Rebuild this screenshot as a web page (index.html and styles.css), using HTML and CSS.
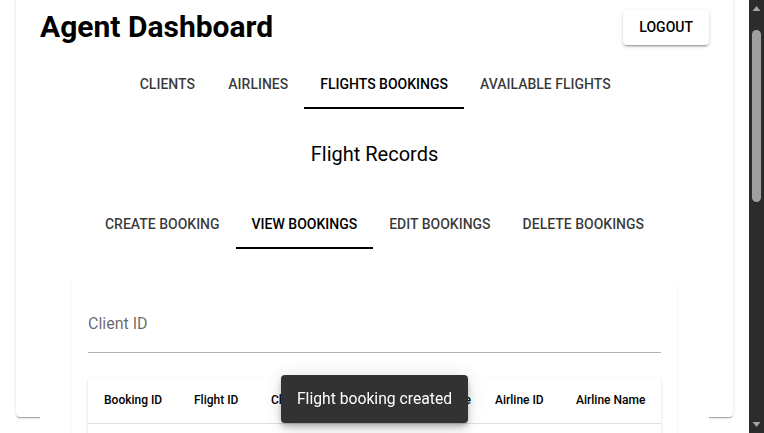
FILE: index.html
```html
<!DOCTYPE html>
<html lang="en">
<head>
<meta charset="utf-8">
<title>Agent Dashboard</title>
<link rel="stylesheet" href="styles.css">
</head>
<body>
<div class="page">
  <div class="card">
    <div class="content">
      <header class="topbar">
        <h1 class="title">Agent Dashboard</h1>
        <button class="btn-logout" type="button">LOGOUT</button>
      </header>
      <nav class="tabs">
        <button class="tab" type="button">CLIENTS</button>
        <button class="tab" type="button">AIRLINES</button>
        <button class="tab active" type="button">FLIGHTS BOOKINGS</button>
        <button class="tab" type="button">AVAILABLE FLIGHTS</button>
      </nav>
      <h2 class="section-title">Flight Records</h2>
      <nav class="tabs sub-tabs">
        <button class="tab" type="button">CREATE BOOKING</button>
        <button class="tab active" type="button">VIEW BOOKINGS</button>
        <button class="tab" type="button">EDIT BOOKINGS</button>
        <button class="tab" type="button">DELETE BOOKINGS</button>
      </nav>
      <section class="panel">
        <div class="field">
          <label class="field-label" for="client-id">Client ID</label>
          <input class="field-input" id="client-id" type="text">
        </div>
        <div class="table-wrap">
          <table class="table">
            <colgroup>
              <col class="c-booking">
              <col class="c-flight">
              <col class="c-client">
              <col class="c-date">
              <col class="c-airline">
              <col class="c-airline-name">
            </colgroup>
            <thead>
              <tr>
                <th>Booking ID</th>
                <th>Flight ID</th>
                <th>Client ID</th>
                <th>Departure Date</th>
                <th>Airline ID</th>
                <th>Airline Name</th>
              </tr>
            </thead>
            <tbody>
              <tr class="empty-row"><td colspan="6"></td></tr>
              <tr class="empty-row"><td colspan="6"></td></tr>
              <tr class="empty-row"><td colspan="6"></td></tr>
              <tr class="empty-row"><td colspan="6"></td></tr>
              <tr class="empty-row"><td colspan="6"></td></tr>
              <tr class="empty-row"><td colspan="6"></td></tr>
              <tr class="empty-row"><td colspan="6"></td></tr>
              <tr class="empty-row"><td colspan="6"></td></tr>
            </tbody>
          </table>
        </div>
      </section>
    </div>
  </div>
</div>
<div class="toast-layer">
  <div class="toast" role="status">Flight booking created</div>
</div>
<div class="scrollbar" aria-hidden="true">
  <svg class="sb-arrow" width="15" height="17" viewBox="0 0 15 17"><path d="M3.5 11 L7.5 6 L11.5 11 Z" fill="#a3a3a3"/></svg>
  <div class="sb-track">
    <div class="sb-thumb"></div>
  </div>
  <svg class="sb-arrow" width="15" height="17" viewBox="0 0 15 17"><path d="M3.5 6 L7.5 11 L11.5 6 Z" fill="#a3a3a3"/></svg>
</div>
<script src="script.js"></script>
</body>
</html>
```

FILE: styles.css
```css
* {
  box-sizing: border-box;
}

html {
  background: #fff;
}

body {
  margin: 0;
  color: #000;
  background: #fff;
  font-family: Roboto, "Liberation Sans", Arial, sans-serif;
}

.page {
  padding: 16px 31px 16px 16px;
}

.card {
  height: 100vh;
  background: #fff;
  border-radius: 4px;
  box-shadow: 0 2px 1px -1px rgba(0, 0, 0, 0.2), 0 1px 1px 0 rgba(0, 0, 0, 0.14), 0 1px 3px 0 rgba(0, 0, 0, 0.12);
  padding: 24px;
}

.content {
  background: #fff;
}

.topbar {
  display: flex;
  align-items: center;
  justify-content: space-between;
  height: 38px;
}

.title {
  margin: 0;
  font-size: 30px;
  line-height: 36px;
  font-weight: 700;
  color: #000;
}

.btn-logout {
  font-family: inherit;
  font-size: 14px;
  font-weight: 500;
  line-height: 23px;
  color: #000;
  background: #fff;
  border: 0;
  border-radius: 4px;
  padding: 6px 16px;
  margin-top: 0;
  box-shadow: 0 3px 1px -2px rgba(0, 0, 0, 0.2), 0 2px 2px 0 rgba(0, 0, 0, 0.14), 0 1px 5px 0 rgba(0, 0, 0, 0.12);
}

.tabs {
  display: flex;
  justify-content: center;
  margin-top: 15px;
}

.tab {
  font-family: inherit;
  font-size: 14px;
  font-weight: 500;
  line-height: 18px;
  color: rgba(0, 0, 0, 0.78);
  background: none;
  border: 0;
  min-width: 90px;
  height: 48px;
  padding: 14px 16px;
  border-bottom: 2px solid transparent;
}

.tab.active {
  color: #000;
  border-bottom-color: #000;
}

.section-title {
  margin: 29px 0 0;
  text-align: center;
  font-size: 20px;
  line-height: 32px;
  font-weight: 400;
  color: #000;
}

.sub-tabs {
  margin-top: 31px;
}

.panel {
  margin: 32px 32px 0;
  padding: 16px;
  background: #fff;
  border-radius: 4px;
  box-shadow: 0 1px 3px rgba(0, 0, 0, 0.07);
}

.field {
  position: relative;
}

.field-label {
  position: absolute;
  left: 0;
  top: 15px;
  font-size: 16px;
  line-height: 24px;
  color: rgba(0, 0, 0, 0.6);
  pointer-events: none;
}

.field-input {
  display: block;
  width: 100%;
  border: 0;
  border-bottom: 1px solid rgba(0, 0, 0, 0.3);
  padding: 15px 0 16px;
  font-family: inherit;
  font-size: 16px;
  line-height: 24px;
  background: transparent;
  color: #000;
  outline: none;
}

.table-wrap {
  margin-top: 24px;
  border-radius: 4px;
  background: #fff;
  box-shadow: 0 2px 1px -1px rgba(0, 0, 0, 0.2), 0 1px 1px 0 rgba(0, 0, 0, 0.14), 0 1px 3px 0 rgba(0, 0, 0, 0.12);
  overflow: hidden;
}

.table {
  width: 100%;
  table-layout: fixed;
  border-collapse: collapse;
  font-size: 12px;
  line-height: 18px;
  color: #000;
}

.c-booking { width: 90px; }
.c-flight { width: 77px; }
.c-client { width: 119px; }
.c-date { width: 105px; }
.c-airline { width: 81px; }
.c-airline-name { width: 101px; }

.table th {
  text-align: left;
  font-weight: 500;
  padding: 14px 16px;
  border-bottom: 1px solid #e0e0e0;
  white-space: nowrap;
  overflow: hidden;
}

.table td {
  height: 53px;
  padding: 16px;
  border-bottom: 1px solid #e0e0e0;
}

.toast-layer {
  position: fixed;
  left: 0;
  right: 15px;
  bottom: 10px;
  display: flex;
  justify-content: center;
  pointer-events: none;
}

.toast {
  background: #323232;
  color: #fff;
  font-size: 15.7px;
  line-height: 20px;
  padding: 14px 16px;
  border-radius: 4px;
  box-shadow: 0 3px 5px -1px rgba(0, 0, 0, 0.2), 0 6px 10px 0 rgba(0, 0, 0, 0.14), 0 1px 18px 0 rgba(0, 0, 0, 0.12);
  white-space: nowrap;
}

.scrollbar {
  position: fixed;
  top: 0;
  right: 0;
  bottom: 0;
  width: 15px;
  background: #2c2c2c;
  display: flex;
  flex-direction: column;
}

.sb-arrow {
  display: block;
  flex: none;
}

.sb-track {
  flex: 1;
  padding: 13px 3px 0 3px;
}

.sb-thumb {
  width: 9px;
  height: 172px;
  border-radius: 5px;
  background: #a0a0a0;
}
```

FILE: script.js
```js
window.scrollTo(0, 34);
```
